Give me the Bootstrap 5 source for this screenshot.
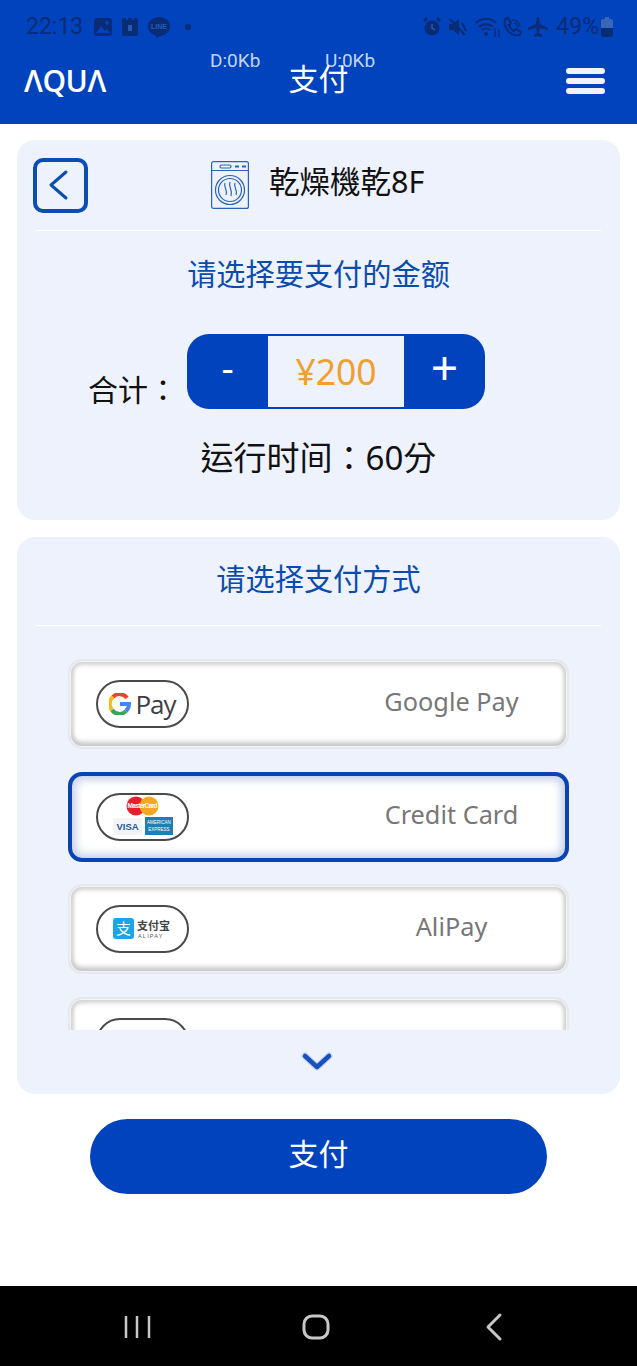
<!DOCTYPE html>
<html lang="zh-Hant">
<head>
    <meta charset="UTF-8">
    <meta name="viewport" content="width=device-width, initial-scale=1.0">
    <title>支付</title>
    <link href="https://cdn.jsdelivr.net/npm/bootstrap@5.3.0/dist/css/bootstrap.min.css" rel="stylesheet">
    <style>
        body { font-family: "Noto Sans", "Noto Sans CJK TC", sans-serif; background: #fff; color: #111; width: 637px; height: 1366px; overflow: hidden; }
        .app-top { background: #0043bd; height: 124px; position: relative; }
        .status-line { height: 54px; padding: 0 24px 0 26px; color: #0a2b75; font-family: Roboto, sans-serif; font-size: 23px; }
        .status-line svg { display: block; }
        .aqua-logo { font-family: "Open Sans", sans-serif; font-weight: 600; font-size: 30px; color: #fff; line-height: 1; letter-spacing: -.4px; }
        .head-row { padding: 4px 32px 0 24px; height: 50px; }
        .head-title { position: absolute; left: 0; right: 0; top: 57px; text-align: center; color: #fff; font-size: 30px; line-height: 44px; }
        .net-rate { position: absolute; top: 50px; font-family: Roboto, sans-serif; font-size: 19px; line-height: 22px; color: #c4d4f2; }
        .burger span { display: block; width: 39px; height: 6px; background: #f0f3fb; border-radius: 3px; margin-bottom: 4px; }
        .pane { background: #eef2fd; border-radius: 18px; margin: 0 17px; }
        .pane-a { margin-top: 16px; height: 380px; padding: 0 19px; }
        .pane-b { margin-top: 17px; height: 557px; padding: 0 19px; }
        .back-box { width: 55px; height: 55px; border: 4px solid #0a4db3; border-radius: 10px; margin-left: -3px; }
        .machine-line { height: 91px; border-bottom: 1px solid #fff; }
        .machine-name { font-size: 30.5px; line-height: 40px; margin: 0 0 8px 20px; }
        .blue-head { color: #0b4bad; font-size: 29.2px; line-height: 40px; text-align: center; }
        .total-label { font-size: 30px; line-height: 40px; margin-right: 9px; padding-top: 36px; }
        .stepper { width: 298px; height: 75px; background: #0043bd; border-radius: 22px; overflow: hidden; }
        .stepper-btn { width: 81px; color: #fff; font-size: 38px; line-height: 1; padding-bottom: 9px; }
        .stepper-plus { font-size: 48px; font-weight: 400; }
        .stepper-val { width: 136px; height: 71px; background: #eef2fd; color: #f0a02c; font-size: 35.5px; }
        .run-time { font-size: 33px; line-height: 44px; text-align: center; }
        .pay-list { height: 404px; overflow: hidden; padding: 33px 32px 0; }
        .pay-row { height: 90px; margin-bottom: 22.5px; background: #fff; border: 2px solid #e7e8ec; border-radius: 14px; box-shadow: inset 0 0 0 1px #f4f5f8, inset 0 3px 4px 1px #d4d4d4, inset 0 -4px 5px 1px #c6c6c6, inset 3px 0 4px #d8d8d8, inset -3px 0 4px #d8d8d8; }
        .pay-row.is-on { border: 4px solid #0a43b2; border-radius: 14px; box-shadow: inset 0 0 9px 4px #c5d0e8; }
        .pay-pill { width: 93px; height: 48px; border: 2px solid #4a4a4a; border-radius: 24px; margin-left: 26px; flex: none; background: #fff; }
        .is-on .pay-pill { margin-left: 24px; }
        .pay-label { color: #777; font-size: 25.3px; position: absolute; left: 0; right: 0; top: 50%; transform: translateY(-56%); text-align: center; padding-left: 266px; }
        .gpay-word { font-family: "Open Sans", sans-serif; font-size: 26px; color: #3c4043; line-height: 1; letter-spacing: -1px; }
        .pay-go { width: 457px; height: 75px; background: #0043bd; color: #fff; border-radius: 38px; font-size: 30px; margin: 25px auto 0; padding-bottom: 7px; }
        .sys-bar { background: #000; height: 80px; margin-top: 92px; }
    </style>
</head>
<body>
    <div class="app-top">
        <div class="status-line d-flex align-items-center justify-content-between">
            <div class="d-flex align-items-center">
                <span style="margin-right:11px">22:13</span>
                <svg width="18" height="18" viewBox="0 0 18 18" style="margin-right:10px"><rect width="18" height="18" rx="3" fill="#0a2b75"/><circle cx="13" cy="5" r="2" fill="#0043bd"/><path d="M2 15l5-7 4 5 2-2 3 4z" fill="#0043bd"/></svg>
                <svg width="16" height="18" viewBox="0 0 16 18" style="margin-right:10px"><path d="M2 0h2v2h2V0h4v2h2V0h2a2 2 0 0 1 2 2v14a2 2 0 0 1-2 2H2a2 2 0 0 1-2-2V2a2 2 0 0 1 2-2z" fill="#0a2b75"/><rect x="6" y="7" width="4" height="6" fill="#2a5ab0"/></svg>
                <svg width="22" height="21" viewBox="0 0 22 21" font-family="Liberation Sans, sans-serif"><ellipse cx="11" cy="9.5" rx="11" ry="9.5" fill="#0a2b75"/><path d="M8 18h6l-5 3z" fill="#0a2b75"/><text x="11" y="12" font-size="7" font-weight="700" fill="#2a5ab0" text-anchor="middle">LINE</text></svg>
                <svg width="6" height="6" viewBox="0 0 6 6" style="margin-left:15px"><circle cx="3" cy="3" r="3" fill="#0a2b75"/></svg>
            </div>
            <div class="d-flex align-items-center">
                <svg width="18" height="20" viewBox="0 0 18 20" class="me-2"><circle cx="9" cy="11" r="7.5" fill="#0a2b75"/><path d="M1 4l3-3M17 4l-3-3" stroke="#0a2b75" stroke-width="2.5"/><path d="M9 7v4l3 2" stroke="#2a5ab0" fill="none" stroke-width="1.5"/></svg>
                <svg width="18" height="18" viewBox="0 0 18 18" class="me-2"><path d="M0 6h4l6-5v16l-6-5H0z" fill="#0a2b75"/><path d="M1 1l15 16M13 5l4 8" stroke="#0a2b75" stroke-width="2"/></svg>
                <svg width="27" height="24" viewBox="0 0 27 24"><path d="M1 8a14 14 0 0 1 20 0M4 12a10 10 0 0 1 14 0M7 15a6 6 0 0 1 8 0" fill="none" stroke="#0a2b75" stroke-width="2"/><circle cx="11" cy="19" r="2" fill="#0a2b75"/><path d="M20 13v9M24 22v-8" stroke="#0a2b75" stroke-width="1.5"/></svg>
                <svg width="22" height="20" viewBox="0 0 22 20" class="me-1"><path d="M3 2l3-1 3 5-2 2c1 3 3 5 5 6l2-2 5 3-1 3c-9 2-17-7-15-16z" fill="none" stroke="#0a2b75" stroke-width="2"/><path d="M10 3a8 8 0 0 1 8 6M12 6a5 5 0 0 1 4 4" fill="none" stroke="#0a2b75" stroke-width="1.5"/></svg>
                <svg width="20" height="20" viewBox="0 0 20 20" class="me-2"><path d="M9 0h2l1 7 8 4v2l-8-2-1 5 3 2v2l-4-1-4 1v-2l3-2-1-5-8 2v-2l8-4z" fill="#0a2b75"/></svg>
                <span>49%</span>
                <svg width="12" height="20" viewBox="0 0 12 20" style="margin-left:2px"><path d="M4 0h4v2h2a2 2 0 0 1 2 2v14a2 2 0 0 1-2 2H2a2 2 0 0 1-2-2V4a2 2 0 0 1 2-2h2z" fill="#3a66b8"/><path d="M0 11h12v7a2 2 0 0 1-2 2H2a2 2 0 0 1-2-2z" fill="#0a2b75"/></svg>
            </div>
        </div>
        <span class="net-rate" style="left:210px">D:0Kb</span>
        <span class="net-rate" style="left:325px">U:0Kb</span>
        <div class="head-title">支付</div>
        <div class="head-row d-flex align-items-center justify-content-between">
            <span class="aqua-logo">ΛQUΛ</span>
            <div class="burger"><span></span><span></span><span class="mb-0"></span></div>
        </div>
    </div>

    <div class="pane pane-a">
        <div class="machine-line d-flex align-items-center position-relative">
            <div class="back-box d-flex align-items-center justify-content-center position-absolute start-0">
                <svg width="22" height="32" viewBox="0 0 22 32" style="margin-right:5px"><path d="M19 3L4 16l15 13" fill="none" stroke="#0a4db3" stroke-width="3" stroke-linecap="round" stroke-linejoin="round"/></svg>
            </div>
            <div class="d-flex align-items-center" style="margin-left:175px">
                <svg width="38" height="48" viewBox="0 0 38 48" fill="none" stroke="#2a63b8" stroke-width="1.2"><rect x=".6" y=".6" width="36.8" height="46.8" rx="2"/><path d="M.6 9.5h36.8"/><rect x="9" y="4" width="11" height="3" rx="1.5"/><path d="M24 5.5h4M31 5.5h4" stroke-width="2"/><circle cx="19" cy="29" r="14.5"/><circle cx="19" cy="29" r="11.5"/><path d="M14 22c-2 4 3 6 1 12M19 21c-2 5 3 7 1 14M24 22c-2 4 3 6 1 12"/></svg>
                <span class="machine-name">乾燥機乾8F</span>
            </div>
        </div>
        <div class="blue-head" style="margin-top:23px">请选择要支付的金额</div>
        <div class="d-flex" style="margin:40px 0 0 52px">
            <div class="total-label" style="width:90px;margin-right:9px">合计：</div>
            <div class="stepper d-flex align-items-center">
                <div class="stepper-btn text-center">-</div>
                <div class="stepper-val d-flex align-items-center justify-content-center">¥200</div>
                <div class="stepper-btn stepper-plus text-center">+</div>
            </div>
        </div>
        <div class="run-time" style="margin-top:26px">运行时间：60分</div>
    </div>

    <div class="pane pane-b">
        <div class="blue-head d-flex align-items-center justify-content-center" style="height:89px;padding-bottom:4px;border-bottom:1px solid #fff">请选择支付方式</div>
        <div class="pay-list">
            <div class="pay-row position-relative d-flex align-items-center">
                <div class="pay-pill d-flex align-items-center justify-content-center">
                    <svg width="22" height="22" viewBox="0 0 22 22" class="me-1" fill="none" stroke-width="4"><path d="M18 5a9 9 0 0 0-14-1" stroke="#ea4335"/><path d="M4 4a9 9 0 0 0-1 13" stroke="#fbbc05"/><path d="M3 17a9 9 0 0 0 14 1" stroke="#34a853"/><path d="M17 18c2-2 3-4 3-7h-9" stroke="#4285f4"/></svg>
                    <span class="gpay-word">Pay</span>
                </div>
                <div class="pay-label">Google Pay</div>
            </div>
            <div class="pay-row is-on position-relative d-flex align-items-center">
                <div class="pay-pill d-flex align-items-center justify-content-center">
                    <svg width="62" height="42" viewBox="0 0 62 42" font-family="Liberation Sans, sans-serif">
                        <circle cx="24" cy="10" r="9.5" fill="#e5202e"/><circle cx="37" cy="10" r="9.5" fill="#f5a623"/>
                        <text x="30.5" y="12" font-size="6.5" font-weight="700" fill="#fff" text-anchor="middle" textLength="30">MasterCard</text>
                        <rect x="1" y="22" width="29" height="17" fill="#f4f4f4"/>
                        <text x="15.5" y="34" font-size="9.5" font-weight="700" fill="#1d5a9e" text-anchor="middle">VISA</text>
                        <rect x="33" y="21" width="28" height="18" fill="#1f7fb5"/>
                        <text x="47" y="28" font-size="4.5" fill="#fff" text-anchor="middle">AMERICAN</text>
                        <text x="47" y="35" font-size="4.5" fill="#fff" text-anchor="middle">EXPRESS</text>
                    </svg>
                </div>
                <div class="pay-label">Credit Card</div>
            </div>
            <div class="pay-row position-relative d-flex align-items-center">
                <div class="pay-pill d-flex align-items-center justify-content-center">
                    <svg width="60" height="24" viewBox="0 0 60 24" font-family="Noto Sans CJK SC, sans-serif">
                        <rect width="21" height="21" y="1" rx="3" fill="#1ba4ea"/>
                        <text x="10.5" y="17" font-size="15" fill="#fff" text-anchor="middle">支</text>
                        <text x="24" y="13" font-size="11" font-weight="700" fill="#444">支付宝</text>
                        <text x="25" y="21" font-size="5.5" font-family="Liberation Sans, sans-serif" fill="#555" letter-spacing="1.2">ALIPAY</text>
                    </svg>
                </div>
                <div class="pay-label">AliPay</div>
            </div>
            <div class="pay-row position-relative d-flex align-items-center">
                <div class="pay-pill"></div>
            </div>
        </div>
        <div class="d-flex justify-content-center" style="padding-top:20px;padding-right:4px">
            <svg width="36" height="26" viewBox="0 0 36 26"><path d="M6 6l12 11L30 6" fill="none" stroke="#9db7ea" stroke-width="7" stroke-linecap="round" stroke-linejoin="round" opacity=".5"/><path d="M6 6l12 11L30 6" fill="none" stroke="#1a4fc0" stroke-width="4.5" stroke-linecap="round" stroke-linejoin="round"/></svg>
        </div>
    </div>

    <div class="pay-go d-flex align-items-center justify-content-center">支付</div>

    <div class="sys-bar d-flex align-items-center">
        <svg width="637" height="80" viewBox="0 0 637 80" fill="none" stroke="#c8c8c8" stroke-width="3"><path d="M126 30v22M137 30v22M149 30v22" stroke-width="2.5"/><rect x="304" y="30" width="24" height="22" rx="8"/><path d="M500 29L488 41l12 12" stroke-linecap="round" stroke-linejoin="round"/></svg>
    </div>
</body>
</html>
